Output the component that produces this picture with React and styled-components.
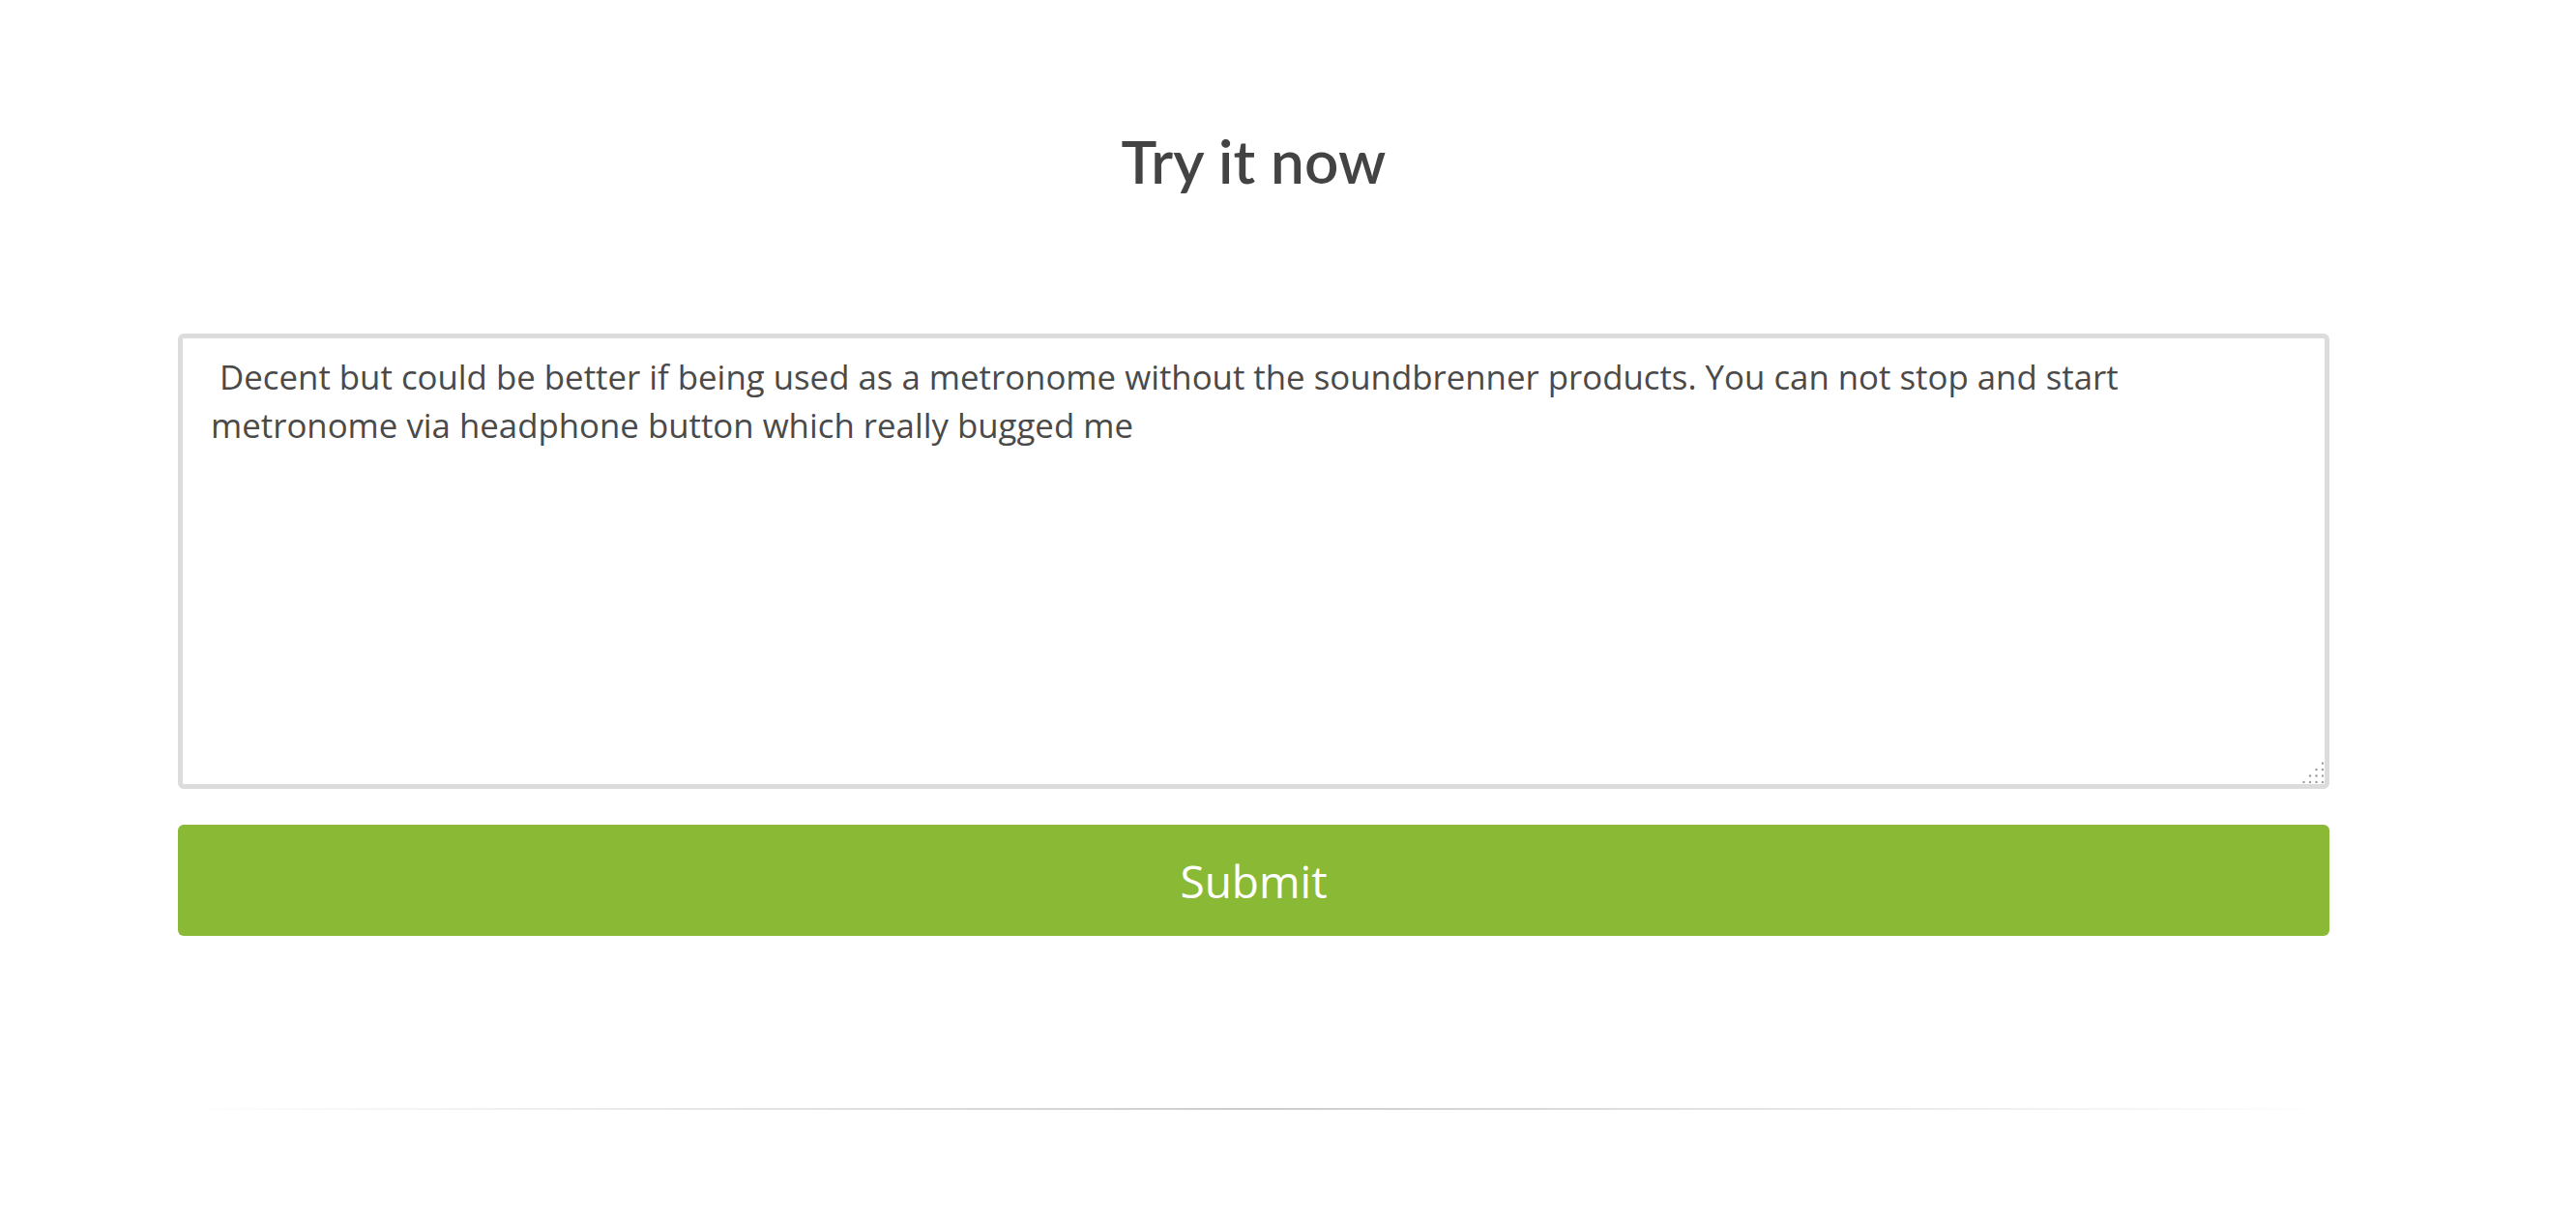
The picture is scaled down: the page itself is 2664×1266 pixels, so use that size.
import React from "react";
import styled, { createGlobalStyle } from "styled-components";

const GlobalStyle = createGlobalStyle`
  html, body {
    margin: 0;
    padding: 0;
    background: #ffffff;
  }
  body {
    font-family: "Open Sans", "Liberation Sans", sans-serif;
  }
`;

const Page = styled.main`
  width: 100%;
  min-height: 1266px;
  background: #fff;
  padding-top: 129px;
  box-sizing: border-box;
`;

const Section = styled.section`
  width: 2225px;
  margin-left: 184px;
  display: flex;
  flex-direction: column;
`;

const Title = styled.h2`
  margin: 0 0 142px;
  font-family: Lato, "Liberation Sans", sans-serif;
  font-weight: 600;
  font-size: 62px;
  line-height: 1.2;
  color: #434343;
  text-align: center;
  letter-spacing: 0.2px;
`;

const Form = styled.form`
  display: flex;
  flex-direction: column;
  gap: 37px;
`;

const FieldWrap = styled.div`
  position: relative;
  display: flex;
`;

const Feedback = styled.textarea`
  box-sizing: border-box;
  width: 100%;
  height: 471px;
  margin: 0;
  padding: 15px 29px 15px 29px;
  border: 5px solid #dcdcdc;
  border-radius: 6px;
  font-family: "Open Sans", "Liberation Sans", sans-serif;
  font-size: 34.8px;
  line-height: 49.5px;
  color: #4a4a4a;
  background: #fff;
  outline: none;
  white-space: pre-wrap;
  resize: none;
`;

const Grip = styled.svg`
  position: absolute;
  right: 6px;
  bottom: 6px;
  width: 22px;
  height: 22px;
  pointer-events: none;
`;

const SubmitButton = styled.button`
  box-sizing: border-box;
  width: 100%;
  height: 115px;
  border: none;
  border-radius: 6px;
  background: #8aba35;
  color: #ffffff;
  font-family: "Open Sans", "Liberation Sans", sans-serif;
  font-size: 46px;
  font-weight: 400;
  cursor: pointer;
`;

const Divider = styled.hr`
  margin: 178px 0 0 0;
  height: 2px;
  border: none;
  background: linear-gradient(
    to right,
    rgba(204, 204, 204, 0) 0%,
    rgba(204, 204, 204, 1) 50%,
    rgba(204, 204, 204, 0) 100%
  );
`;

const reviewText =
  " Decent but could be better if being used as a metronome without the soundbrenner products. You can not stop and start metronome via headphone button which really bugged me";

const gripDots = [];
for (let r = 0; r < 4; r++) {
  for (let c = 3 - r; c < 4; c++) {
    gripDots.push([1.5 + c * 6.5, 1.5 + r * 6.5]);
  }
}

export default function App() {
  return (
    <>
      <GlobalStyle />
      <Page>
        <Section>
          <Title>Try it now</Title>
          <Form onSubmit={(e) => e.preventDefault()}>
            <FieldWrap>
              <Feedback defaultValue={reviewText} />
              <Grip viewBox="0 0 22 22" aria-hidden="true">
                {gripDots.map(([x, y], i) => (
                  <circle key={i} cx={x} cy={y} r="1.2" fill="#9a9a9a" />
                ))}
              </Grip>
            </FieldWrap>
            <SubmitButton type="submit">Submit</SubmitButton>
          </Form>
          <Divider />
        </Section>
      </Page>
    </>
  );
}
